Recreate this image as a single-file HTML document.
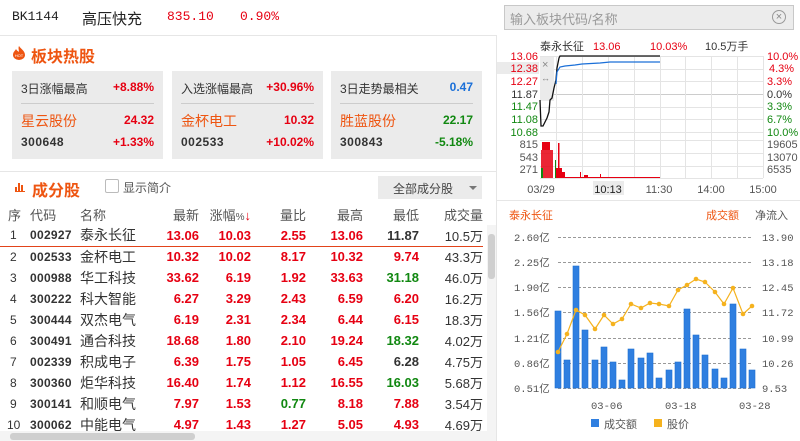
<!DOCTYPE html>
<html><head><meta charset="utf-8"><style>
*{margin:0;padding:0;box-sizing:border-box}
body{width:800px;height:441px;overflow:hidden;background:#fff;font-family:"Liberation Sans","Noto Sans CJK SC",sans-serif;position:relative;color:#333}
.a{position:absolute;white-space:nowrap}
.r{color:#e60012}.g{color:#118811}.o{color:#ee5511}.b{color:#1a6fd8}
.card{position:absolute;top:71px;width:151px;height:88px;background:#ebebeb}
.card .l1{position:absolute;left:9px;top:9px;font-size:12px;color:#333}
.card .v1{position:absolute;right:9px;top:9px;font-size:12px;font-weight:bold}
.card .hr{position:absolute;left:9px;right:9px;top:32px;height:1px;background:#ccc}
.card .n{position:absolute;left:9px;top:40px;font-size:14px;color:#ee5511}
.card .p{position:absolute;right:9px;top:42px;font-size:12px;font-weight:bold}
.card .c{position:absolute;left:9px;top:64px;font-size:12px;font-weight:bold;color:#333;letter-spacing:.5px}
.card .pc{position:absolute;right:9px;top:64px;font-size:12px;font-weight:bold}
table{position:absolute;left:0;top:204px;border-collapse:collapse;table-layout:fixed}
td{height:21px;padding:0;font-size:13px;font-weight:bold;text-align:right;white-space:nowrap}
td.s{text-align:left;padding-left:10px;font-weight:normal;font-size:12px}
td.cd{text-align:left;padding-left:2px;font-size:12px;letter-spacing:.3px;color:#333}
td.nm{text-align:left;font-weight:normal;font-size:14px;color:#333}
tr.h td{font-weight:normal;font-size:13px;color:#555;height:21px}
td.k{color:#333}
</style></head><body>
<div class="a" style="left:12px;top:9px;font-size:13px;font-family:'Liberation Mono',monospace;color:#222">BK1144</div>
<div class="a" style="left:82px;top:8px;font-size:15px;color:#222">高压快充</div>
<div class="a r" style="left:167px;top:9px;font-size:13px;font-family:'Liberation Mono',monospace">835.10</div>
<div class="a r" style="left:240px;top:9px;font-size:13px;font-family:'Liberation Mono',monospace">0.90%</div>
<div class="a" style="left:0;top:35px;width:497px;height:1px;background:#e6e6e6"></div>
<div class="a" style="left:496px;top:35px;width:1px;height:406px;background:#e6e6e6"></div>
<div class="a" style="left:504px;top:5px;width:290px;height:25px;background:#ececec;border:1px solid #c8c8c8"></div>
<div class="a" style="left:510px;top:9px;font-size:13px;color:#999">输入板块代码/名称</div>
<div class="a" style="left:772px;top:10px;width:14px;height:14px;border:1px solid #999;border-radius:50%;font-size:11px;line-height:12px;text-align:center;color:#888">×</div>

<svg class="a" style="left:12px;top:45px" width="14" height="15"><path d="M7 1C9 4 13 6 13 10a6 5 0 0 1-12 0c0-3 2-4 3-6 1 2 2 2 3 3 0-2-1-4 0-6z" fill="#ee5511"/><text x="7" y="12" font-size="4" fill="#fff" text-anchor="middle">HOT</text></svg>
<div class="a o" style="left:31px;top:43px;font-size:16px;font-weight:bold">板块热股</div>
<div class="card" style="left:12px"><div class="l1">3日涨幅最高</div><div class="v1 r">+8.88%</div><div class="hr"></div><div class="n">星云股份</div><div class="p r">24.32</div><div class="c">300648</div><div class="pc r">+1.33%</div></div>
<div class="card" style="left:172px"><div class="l1">入选涨幅最高</div><div class="v1 r">+30.96%</div><div class="hr"></div><div class="n">金杯电工</div><div class="p r">10.32</div><div class="c">002533</div><div class="pc r">+10.02%</div></div>
<div class="card" style="left:331px"><div class="l1">3日走势最相关</div><div class="v1 b">0.47</div><div class="hr"></div><div class="n">胜蓝股份</div><div class="p g">22.17</div><div class="c">300843</div><div class="pc g">-5.18%</div></div>
<div class="a" style="left:0;top:171px;width:496px;height:1px;background:#e6e6e6"></div>

<svg class="a" style="left:15px;top:181px" width="10" height="11"><rect x="0" y="6" width="2" height="5" fill="#ee5511"/><rect x="3" y="2" width="2" height="9" fill="#ee5511"/><rect x="6" y="4" width="2" height="7" fill="#ee5511"/><rect x="0" y="10" width="10" height="1" fill="#ee5511"/></svg>
<div class="a o" style="left:32px;top:177px;font-size:16px;font-weight:bold">成分股</div>
<div class="a" style="left:105px;top:179px;width:14px;height:14px;border:1px solid #bbb;border-radius:2px;background:#fff"></div>
<div class="a" style="left:123px;top:179px;font-size:12px;color:#555">显示简介</div>
<div class="a" style="left:378px;top:176px;width:104px;height:23px;background:#ebebeb"></div>
<div class="a" style="left:393px;top:180px;font-size:12px;color:#444">全部成分股</div>
<div class="a" style="left:469px;top:186px;width:0;height:0;border-left:4px solid transparent;border-right:4px solid transparent;border-top:4px solid #777"></div>

<table>
<colgroup><col style="width:28px"><col style="width:52px"><col style="width:60px"><col style="width:59px"><col style="width:52px"><col style="width:55px"><col style="width:57px"><col style="width:56px"><col style="width:64px"></colgroup>
<tr class="h"><td class="s" style="padding-left:8px;font-size:13px">序</td><td class="cd" style="font-weight:normal;font-size:13px;color:#555">代码</td><td class="nm" style="font-size:13px;color:#555">名称</td><td>最新</td><td>涨幅<span style="font-size:10px">%</span><span style="color:#e60012">↓</span></td><td>量比</td><td>最高</td><td>最低</td><td>成交量</td></tr>
<tr style="border-bottom:1px solid #e2431a"><td class="s">1</td><td class="cd">002927</td><td class="nm">泰永长征</td><td class="r">13.06</td><td class="r">10.03</td><td class="r">2.55</td><td class="r">13.06</td><td class="k">11.87</td><td class="k" style="font-weight:normal">10.5万</td></tr>
<tr><td class="s">2</td><td class="cd">002533</td><td class="nm">金杯电工</td><td class="r">10.32</td><td class="r">10.02</td><td class="r">8.17</td><td class="r">10.32</td><td class="r">9.74</td><td class="k" style="font-weight:normal">43.3万</td></tr>
<tr><td class="s">3</td><td class="cd">000988</td><td class="nm">华工科技</td><td class="r">33.62</td><td class="r">6.19</td><td class="r">1.92</td><td class="r">33.63</td><td class="g">31.18</td><td class="k" style="font-weight:normal">46.0万</td></tr>
<tr><td class="s">4</td><td class="cd">300222</td><td class="nm">科大智能</td><td class="r">6.27</td><td class="r">3.29</td><td class="r">2.43</td><td class="r">6.59</td><td class="r">6.20</td><td class="k" style="font-weight:normal">16.2万</td></tr>
<tr><td class="s">5</td><td class="cd">300444</td><td class="nm">双杰电气</td><td class="r">6.19</td><td class="r">2.31</td><td class="r">2.34</td><td class="r">6.44</td><td class="r">6.15</td><td class="k" style="font-weight:normal">18.3万</td></tr>
<tr><td class="s">6</td><td class="cd">300491</td><td class="nm">通合科技</td><td class="r">18.68</td><td class="r">1.80</td><td class="r">2.10</td><td class="r">19.24</td><td class="g">18.32</td><td class="k" style="font-weight:normal">4.02万</td></tr>
<tr><td class="s">7</td><td class="cd">002339</td><td class="nm">积成电子</td><td class="r">6.39</td><td class="r">1.75</td><td class="r">1.05</td><td class="r">6.45</td><td class="k">6.28</td><td class="k" style="font-weight:normal">4.75万</td></tr>
<tr><td class="s">8</td><td class="cd">300360</td><td class="nm">炬华科技</td><td class="r">16.40</td><td class="r">1.74</td><td class="r">1.12</td><td class="r">16.55</td><td class="g">16.03</td><td class="k" style="font-weight:normal">5.68万</td></tr>
<tr><td class="s">9</td><td class="cd">300141</td><td class="nm">和顺电气</td><td class="r">7.97</td><td class="r">1.53</td><td class="g">0.77</td><td class="r">8.18</td><td class="r">7.88</td><td class="k" style="font-weight:normal">3.54万</td></tr>
<tr><td class="s" style="padding-left:7px">10</td><td class="cd">300062</td><td class="nm">中能电气</td><td class="r">4.97</td><td class="r">1.43</td><td class="r">1.27</td><td class="r">5.05</td><td class="r">4.93</td><td class="k" style="font-weight:normal">4.69万</td></tr>
</table>
<div class="a" style="left:487px;top:225px;width:9px;height:207px;background:#f4f4f4"></div>
<div class="a" style="left:488px;top:234px;width:7px;height:45px;background:#cfcfcf;border-radius:3px"></div>
<div class="a" style="left:0;top:431px;width:496px;height:10px;background:#f4f4f4"></div>
<div class="a" style="left:10px;top:433px;width:185px;height:7px;background:#cfcfcf;border-radius:3px"></div>

<svg class="a" style="left:497px;top:36px" width="303" height="405" viewBox="497 36 303 405" font-family="Liberation Sans, Noto Sans CJK SC, sans-serif">
<text x="540" y="50" font-size="11" fill="#333">泰永长征</text>
<text x="593" y="50" font-size="11" fill="#e60012">13.06</text>
<text x="650" y="50" font-size="11" fill="#e60012">10.03%</text>
<text x="705" y="50" font-size="11" fill="#333">10.5万手</text>
<g stroke="#e4e4e4" stroke-width="1">
<line x1="540" y1="56.5" x2="763" y2="56.5"/><line x1="540" y1="69.5" x2="763" y2="69.5"/><line x1="540" y1="81.5" x2="763" y2="81.5"/><line x1="540" y1="94.5" x2="763" y2="94.5" stroke="#ccc"/><line x1="540" y1="107.5" x2="763" y2="107.5"/><line x1="540" y1="119.5" x2="763" y2="119.5"/><line x1="540" y1="132.5" x2="763" y2="132.5"/>
<line x1="540" y1="140.5" x2="763" y2="140.5"/><line x1="540" y1="153.5" x2="763" y2="153.5"/><line x1="540" y1="166.5" x2="763" y2="166.5"/><line x1="540" y1="178.5" x2="763" y2="178.5"/>
<line x1="582.5" y1="56" x2="582.5" y2="178"/><line x1="608.5" y1="56" x2="608.5" y2="178"/><line x1="634.5" y1="56" x2="634.5" y2="178"/><line x1="660.5" y1="56" x2="660.5" y2="178"/><line x1="685.5" y1="56" x2="685.5" y2="178"/><line x1="711.5" y1="56" x2="711.5" y2="178"/><line x1="737.5" y1="56" x2="737.5" y2="178"/><line x1="763.5" y1="56" x2="763.5" y2="178"/><line x1="556.5" y1="56" x2="556.5" y2="178"/>
</g>
<rect x="540" y="57" width="14" height="44" fill="#ebebeb"/>
<text x="542" y="68" font-size="11" fill="#888">×</text><text x="541" y="81" font-size="9" fill="#888">↔</text>
<polyline fill="none" stroke="#111" stroke-width="1.3" points="540,100 541,126 543,126 545,122 547,118 549,112 550,100 552,98 554,88 556,80 557,68 559,58 560,56 660,56"/>
<polyline fill="none" stroke="#1a6fd8" stroke-width="1.2" points="556,84 557,72 560,67 565,66 575,65 582,64 600,63 610,62 660,62"/>
<g fill="#e60012">
<rect x="541" y="150" width="12" height="28" opacity=".85"/><rect x="542" y="142" width="8" height="8"/><rect x="558" y="143" width="1.5" height="35"/><rect x="556" y="168" width="6" height="10"/><rect x="561" y="172" width="4" height="6"/><rect x="580" y="172" width="1" height="6"/><rect x="584" y="175" width="4" height="3"/><rect x="600" y="174" width="1" height="4"/><rect x="565" y="177" width="95" height="1"/>
</g>
<rect x="541" y="168" width="2" height="10" fill="#118811"/><rect x="555" y="160" width="1" height="18" fill="#118811"/>
<g font-size="11" text-anchor="end">
<text x="538" y="60" fill="#e60012">13.06</text><rect x="497" y="62" width="42" height="12" fill="#ebebeb"/><text x="538" y="72" fill="#e60012">12.38</text><text x="538" y="85" fill="#e60012">12.27</text><text x="538" y="98" fill="#333">11.87</text><text x="538" y="110" fill="#118811">11.47</text><text x="538" y="123" fill="#118811">11.08</text><text x="538" y="136" fill="#118811">10.68</text>
<text x="538" y="148" fill="#555">815</text><text x="538" y="161" fill="#555">543</text><text x="538" y="173" fill="#555">271</text>
</g>
<g font-size="11">
<text x="767" y="60" fill="#e60012">10.0%</text><text x="769" y="72" fill="#e60012">4.3%</text><text x="767" y="85" fill="#e60012">3.3%</text><text x="767" y="98" fill="#333">0.0%</text><text x="767" y="110" fill="#118811">3.3%</text><text x="767" y="123" fill="#118811">6.7%</text><text x="767" y="136" fill="#118811">10.0%</text>
<text x="767" y="148" fill="#555">19605</text><text x="767" y="161" fill="#555">13070</text><text x="767" y="173" fill="#555">6535</text>
</g>
<rect x="593" y="181" width="31" height="14" fill="#ebebeb"/>
<g font-size="11" fill="#555" text-anchor="middle"><text x="541" y="193">03/29</text><text x="608" y="193" fill="#222">10:13</text><text x="659" y="193">11:30</text><text x="711" y="193">14:00</text><text x="763" y="193">15:00</text></g>
<line x1="497" y1="200.5" x2="800" y2="200.5" stroke="#e6e6e6"/>
<text x="509" y="219" font-size="11" fill="#ee5511">泰永长征</text>
<text x="706" y="219" font-size="11" fill="#ee5511">成交额</text>
<text x="755" y="219" font-size="11" fill="#555">净流入</text>
<g stroke="#999" stroke-dasharray="3,2" stroke-width="1">
<line x1="558" y1="237.5" x2="752" y2="237.5"/><line x1="558" y1="262.5" x2="752" y2="262.5"/><line x1="558" y1="287.5" x2="752" y2="287.5"/><line x1="558" y1="312.5" x2="752" y2="312.5"/><line x1="558" y1="338.5" x2="752" y2="338.5"/><line x1="558" y1="363.5" x2="752" y2="363.5"/><line x1="558" y1="388.5" x2="752" y2="388.5"/>
</g>
<g font-size="10.5" fill="#555" font-family="Liberation Mono, Noto Sans CJK SC, monospace">
<text x="514" y="241">2.60亿</text><text x="514" y="266">2.25亿</text><text x="514" y="291">1.90亿</text><text x="514" y="316">1.56亿</text><text x="514" y="342">1.21亿</text><text x="514" y="367">0.86亿</text><text x="514" y="392">0.51亿</text>
<text x="762" y="241">13.90</text><text x="762" y="266">13.18</text><text x="762" y="291">12.45</text><text x="762" y="316">11.72</text><text x="762" y="342">10.99</text><text x="762" y="367">10.26</text><text x="762" y="392">9.53</text>
<text x="591" y="409">03-06</text><text x="665" y="409">03-18</text><text x="739" y="409">03-28</text>
</g>
<g fill="#2f7fe0" stroke="#1f6fd0" stroke-width=".6">
<rect x="555" y="311" width="6" height="77"/><rect x="564" y="360" width="6" height="28"/><rect x="573" y="266" width="6" height="122"/><rect x="582" y="330" width="6" height="58"/><rect x="592" y="360" width="6" height="28"/><rect x="601" y="347" width="6" height="41"/><rect x="610" y="362" width="6" height="26"/><rect x="619" y="380" width="6" height="8"/><rect x="628" y="349" width="6" height="39"/><rect x="638" y="358" width="6" height="30"/><rect x="647" y="353" width="6" height="35"/><rect x="656" y="378" width="6" height="10"/><rect x="666" y="370" width="6" height="18"/><rect x="675" y="362" width="6" height="26"/><rect x="684" y="309" width="6" height="79"/><rect x="693" y="335" width="6" height="53"/><rect x="702" y="355" width="6" height="33"/><rect x="712" y="369" width="6" height="19"/><rect x="721" y="378" width="6" height="10"/><rect x="730" y="304" width="6" height="84"/><rect x="740" y="349" width="6" height="39"/><rect x="749" y="370" width="6" height="18"/>
</g>
<polyline fill="none" stroke="#f5b21e" stroke-width="1.2" points="558,352 567,334 576,310 585,315 595,329 604,315 613,324 622,319 631,304 641,308 650,303 659,304 669,306 678,290 687,285 696,279 705,282 715,292 724,304 733,288 743,314 752,306"/>
<g fill="#f5b21e"><circle cx="558" cy="352" r="2.3"/><circle cx="567" cy="334" r="2.3"/><circle cx="576" cy="310" r="2.3"/><circle cx="585" cy="315" r="2.3"/><circle cx="595" cy="329" r="2.3"/><circle cx="604" cy="315" r="2.3"/><circle cx="613" cy="324" r="2.3"/><circle cx="622" cy="319" r="2.3"/><circle cx="631" cy="304" r="2.3"/><circle cx="641" cy="308" r="2.3"/><circle cx="650" cy="303" r="2.3"/><circle cx="659" cy="304" r="2.3"/><circle cx="669" cy="306" r="2.3"/><circle cx="678" cy="290" r="2.3"/><circle cx="687" cy="285" r="2.3"/><circle cx="696" cy="279" r="2.3"/><circle cx="705" cy="282" r="2.3"/><circle cx="715" cy="292" r="2.3"/><circle cx="724" cy="304" r="2.3"/><circle cx="733" cy="288" r="2.3"/><circle cx="743" cy="314" r="2.3"/><circle cx="752" cy="306" r="2.3"/></g>
<rect x="591" y="419" width="8" height="8" fill="#2f7fe0"/><text x="604" y="428" font-size="11" fill="#555">成交额</text>
<rect x="654" y="419" width="8" height="8" fill="#f5b21e"/><text x="667" y="428" font-size="11" fill="#555">股价</text>
</svg>
</body></html>
